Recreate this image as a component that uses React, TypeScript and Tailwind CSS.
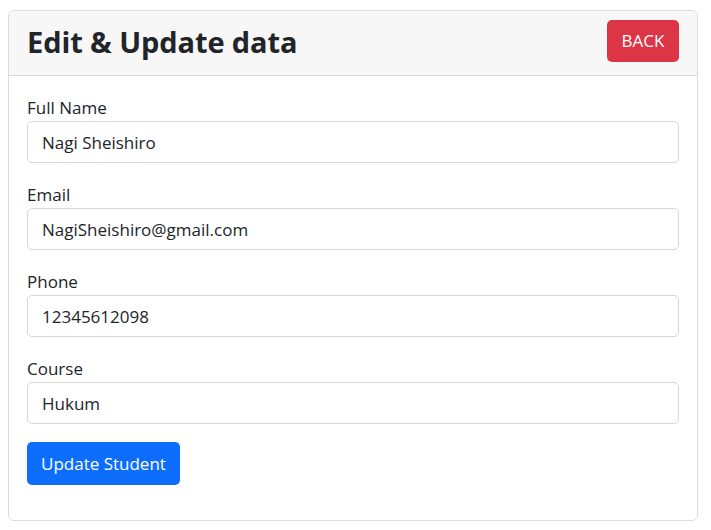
import React, { useState } from 'react';

const fields = [
  { label: 'Full Name', value: 'Nagi Sheishiro' },
  { label: 'Email', value: 'NagiSheishiro@gmail.com' },
  { label: 'Phone', value: '12345612098' },
  { label: 'Course', value: 'Hukum' },
];

const App: React.FC = () => {
  const [form, setForm] = useState(fields);

  return (
    <div className="min-h-screen bg-white pt-[10px] pl-2 text-[#212529]" style={{ fontFamily: '"Open Sans", "Noto Sans", sans-serif' }}>
      <div className="w-[690px] rounded-md border border-[#dcdcdc] overflow-hidden">
        {/* Header */}
        <div className="h-[65px] flex items-center justify-between px-[18px] pb-1 bg-[#f7f7f7] border-b border-[#d9d9d9]">
          <h2 className="text-[29px] font-bold leading-none tracking-[-0.1px]">Edit &amp; Update data</h2>
          <button className="h-[42px] w-[72px] rounded-[5px] bg-[#dc3545] text-white text-[17px]">BACK</button>
        </div>

        {/* Body */}
        <div className="px-[18px] pt-5 pb-[35px]">
          {form.map((f, i) => (
            <div key={f.label} className="mb-5">
              <label className="block text-[17px] leading-6 mb-px">{f.label}</label>
              <input
                value={f.value}
                onChange={(e) => {
                  const next = [...form];
                  next[i] = { ...f, value: e.target.value };
                  setForm(next);
                }}
                className="w-full h-[42px] rounded-[5px] border border-[#d6d6d6] px-[14px] text-[17px] text-[#212529] outline-none"
              />
            </div>
          ))}
          <button className="-mt-0.5 h-[43px] px-[14px] rounded-[5px] bg-[#0d6efd] text-white text-[17px]">Update Student</button>
        </div>
      </div>
    </div>
  );
};

export default App;
